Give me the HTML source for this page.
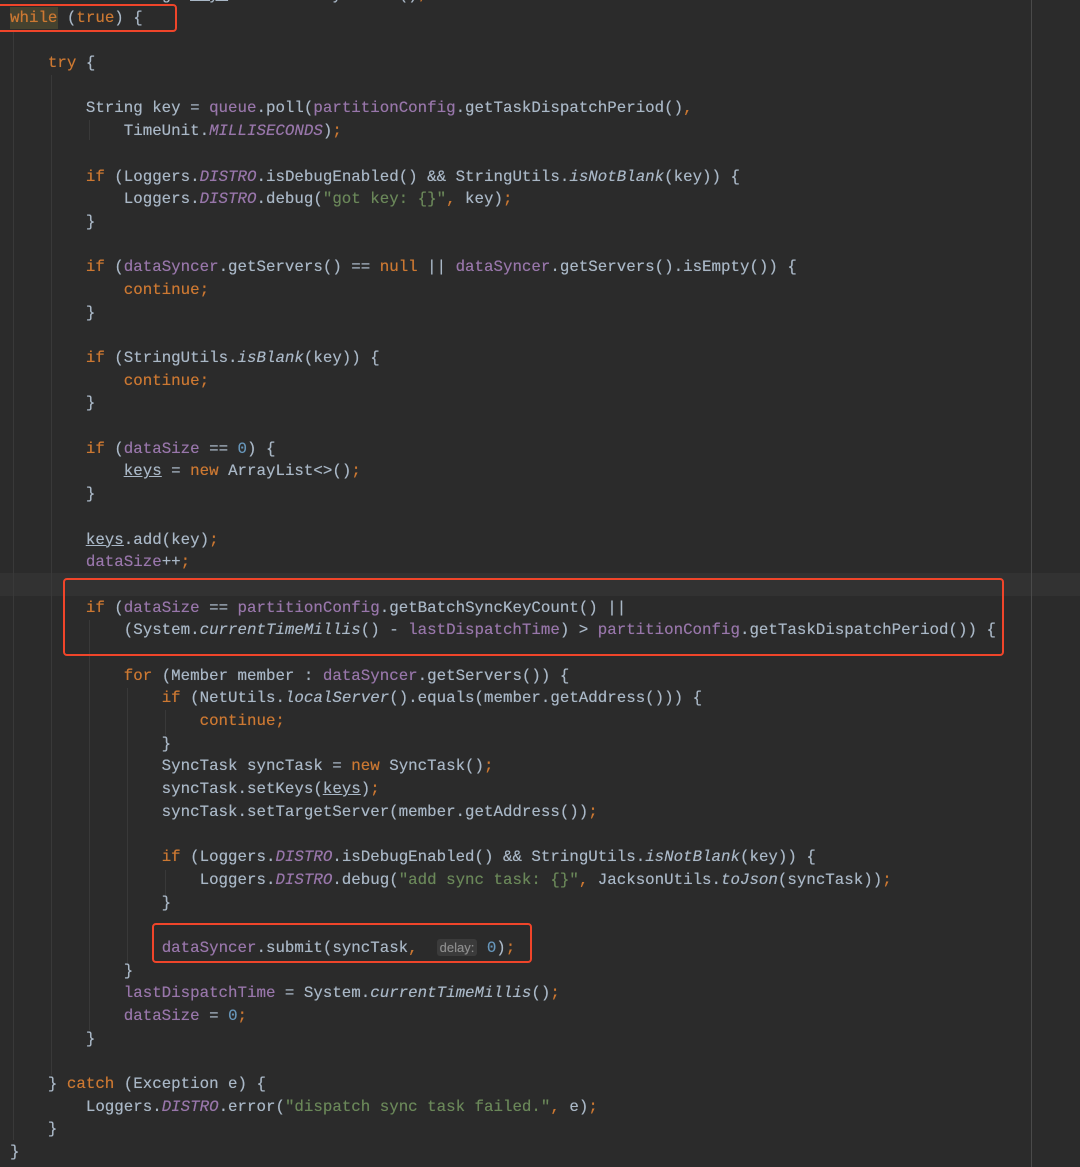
<!DOCTYPE html>
<html><head><meta charset="utf-8"><style>
html,body{margin:0;padding:0;background:#2b2b2b;width:1080px;height:1167px;overflow:hidden;position:relative}
pre{position:absolute;left:10px;top:-16px;margin:0;font-family:"Liberation Mono",monospace;font-size:15.8px;line-height:22.68px;color:#a9b7c6;white-space:pre;text-shadow:0 0 0.4px currentColor}
.k{color:#cc7832}.f{color:#9876aa}.s{color:#6a8759}.n{color:#6897bb}.i{font-style:italic}
.fi{color:#9876aa;font-style:italic}.u{text-decoration:underline}
.hint{font-family:"Liberation Sans",sans-serif;font-size:13px;color:#8c8c8c;background:#3b3b3b;border-radius:3px;padding:1px 3px}
.box{position:absolute;border:2px solid #f0452a;border-radius:4px}
.g{position:absolute;width:1px;background:#393939}
</style></head><body>
<div style="position:absolute;left:0;top:573px;width:1080px;height:23px;background:#323232"></div>
<div style="position:absolute;left:1031px;top:0;width:1px;height:1167px;background:#4a4a4a"></div>
<div class="g" style="left:13px;top:30px;height:1110px"></div>
<div class="g" style="left:51px;top:75px;height:1000px"></div>
<div class="g" style="left:89px;top:120px;height:20px"></div>
<div class="g" style="left:89px;top:620px;height:410px"></div>
<div class="g" style="left:127px;top:688px;height:275px"></div>
<div class="g" style="left:165px;top:710px;height:25px"></div>
<div class="g" style="left:165px;top:870px;height:25px"></div>
<div style="position:absolute;left:10px;top:7px;width:48px;height:22px;background:#45422f"></div>
<pre><span class="k">final</span> List&lt;String&gt; <span class="u">keys</span> = <span class="k">new</span> ArrayList&lt;&gt;()<span class="k">;</span>
<span class="k">while</span> (<span class="k">true</span>) {

    <span class="k">try</span> {

        String key = <span class="f">queue</span>.poll(<span class="f">partitionConfig</span>.getTaskDispatchPeriod()<span class="k">,</span>
            TimeUnit.<span class="fi">MILLISECONDS</span>)<span class="k">;</span>

        <span class="k">if</span> (Loggers.<span class="fi">DISTRO</span>.isDebugEnabled() &amp;&amp; StringUtils.<span class="i">isNotBlank</span>(key)) {
            Loggers.<span class="fi">DISTRO</span>.debug(<span class="s">"got key: {}"</span><span class="k">,</span> key)<span class="k">;</span>
        }

        <span class="k">if</span> (<span class="f">dataSyncer</span>.getServers() == <span class="k">null</span> || <span class="f">dataSyncer</span>.getServers().isEmpty()) {
            <span class="k">continue;</span>
        }

        <span class="k">if</span> (StringUtils.<span class="i">isBlank</span>(key)) {
            <span class="k">continue;</span>
        }

        <span class="k">if</span> (<span class="f">dataSize</span> == <span class="n">0</span>) {
            <span class="u">keys</span> = <span class="k">new</span> ArrayList&lt;&gt;()<span class="k">;</span>
        }

        <span class="u">keys</span>.add(key)<span class="k">;</span>
        <span class="f">dataSize</span>++<span class="k">;</span>

        <span class="k">if</span> (<span class="f">dataSize</span> == <span class="f">partitionConfig</span>.getBatchSyncKeyCount() ||
            (System.<span class="i">currentTimeMillis</span>() - <span class="f">lastDispatchTime</span>) &gt; <span class="f">partitionConfig</span>.getTaskDispatchPeriod()) {

            <span class="k">for</span> (Member member : <span class="f">dataSyncer</span>.getServers()) {
                <span class="k">if</span> (NetUtils.<span class="i">localServer</span>().equals(member.getAddress())) {
                    <span class="k">continue;</span>
                }
                SyncTask syncTask = <span class="k">new</span> SyncTask()<span class="k">;</span>
                syncTask.setKeys(<span class="u">keys</span>)<span class="k">;</span>
                syncTask.setTargetServer(member.getAddress())<span class="k">;</span>

                <span class="k">if</span> (Loggers.<span class="fi">DISTRO</span>.isDebugEnabled() &amp;&amp; StringUtils.<span class="i">isNotBlank</span>(key)) {
                    Loggers.<span class="fi">DISTRO</span>.debug(<span class="s">"add sync task: {}"</span><span class="k">,</span> JacksonUtils.<span class="i">toJson</span>(syncTask))<span class="k">;</span>
                }

                <span class="f">dataSyncer</span>.submit(syncTask<span class="k">,</span>  <span class="hint">delay:</span> <span class="n">0</span>)<span class="k">;</span>
            }
            <span class="f">lastDispatchTime</span> = System.<span class="i">currentTimeMillis</span>()<span class="k">;</span>
            <span class="f">dataSize</span> = <span class="n">0</span><span class="k">;</span>
        }

    } <span class="k">catch</span> (Exception e) {
        Loggers.<span class="fi">DISTRO</span>.error(<span class="s">"dispatch sync task failed."</span><span class="k">,</span> e)<span class="k">;</span>
    }
}</pre>
<div class="box" style="left:-4px;top:4px;width:177px;height:24px"></div>
<div class="box" style="left:63px;top:578px;width:937px;height:74px"></div>
<div class="box" style="left:152px;top:923px;width:376px;height:36px"></div>
</body></html>
